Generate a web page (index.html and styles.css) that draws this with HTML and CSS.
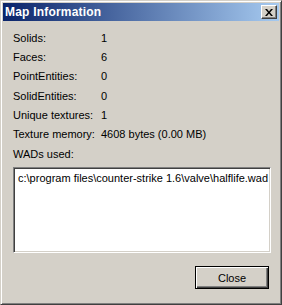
FILE: index.html
```html
<!DOCTYPE html>
<html lang="en">
  <head>
    <meta charset="UTF-8">
    <title>Map Information</title>
    <link rel="stylesheet" href="styles.css">
  </head>
  <body>
    <div class="window">
      <div class="titlebar">
        <span class="title">Map Information</span>
        <button class="close-x" title="Close">
          <svg width="8" height="7" viewBox="0 0 8 7">
            <path d="M0 0h2l2 2.5L6 0h2L5 3.5 8 7H6L4 4.5 2 7H0l3-3.5z" fill="#000"/>
          </svg>
        </button>
      </div>
      <div class="content">
        <div class="info">
          <span>Solids:</span><span>1</span>
          <span>Faces:</span><span>6</span>
          <span>PointEntities:</span><span>0</span>
          <span>SolidEntities:</span><span>0</span>
          <span>Unique textures:</span><span>1</span>
          <span>Texture memory:</span><span>4608 bytes (0.00 MB)</span>
          <span class="wide">WADs used:</span>
        </div>
        <div class="listbox">
          <div class="item">c:\program files\counter-strike 1.6\valve\halflife.wad</div>
        </div>
        <div class="buttons">
          <button class="btn default">Close</button>
        </div>
      </div>
    </div>
  </body>
</html>
```

FILE: styles.css
```css
body {
    margin: 0;
    font-family: "Liberation Sans", Arial, sans-serif;
    font-size: 11px;
    color: #000;
}
.window {
    width: 282px;
    height: 305px;
    box-sizing: border-box;
    background: #d4d0c8;
    border: 1px solid;
    border-color: #d4d0c8 #404040 #404040 #d4d0c8;
    box-shadow: inset 1px 1px #fff, inset -1px -1px #808080;
    padding: 2px;
    display: flex;
    flex-direction: column;
}
.titlebar {
    height: 18px;
    display: flex;
    align-items: center;
    justify-content: space-between;
    padding: 0 2px 0 2px;
    background: linear-gradient(to right, #0a246a, #a6caf0);
}
.title {
    color: #fff;
    font-family: "Liberation Sans", Arial, sans-serif;
    font-weight: bold;
    font-size: 12px;
    letter-spacing: 0.2px;
}
.close-x {
    width: 16px;
    height: 14px;
    padding: 0;
    margin: 0;
    background: #d4d0c8;
    border: 1px solid;
    border-color: #fff #404040 #404040 #fff;
    box-shadow: inset -1px -1px #808080;
    display: flex;
    align-items: center;
    justify-content: center;
}
.content {
    flex: 1;
    padding: 7px 8px 0 10px;
    display: flex;
    flex-direction: column;
}
.info {
    display: grid;
    grid-template-columns: 88px auto;
    grid-auto-rows: 19.33px;
    align-items: center;
}
.wide {
    grid-column: 1 / 3;
}
.listbox {
    margin-top: 4px;
    height: 86px;
    box-sizing: border-box;
    background: #fff;
    border: 1px solid;
    border-color: #808080 #fff #fff #808080;
    box-shadow: inset 1px 1px #404040, inset -1px -1px #d4d0c8;
    padding: 3px 0 0 4px;
    overflow: hidden;
}
.item {
    white-space: nowrap;
    line-height: 14px;
}
.buttons {
    display: flex;
    justify-content: flex-end;
    margin-top: 13px;
    padding-right: 2px;
}
.btn {
    width: 74px;
    height: 23px;
    box-sizing: border-box;
    font-family: "Liberation Sans", Arial, sans-serif;
    font-size: 11px;
    color: #000;
    background: #d4d0c8;
    padding: 0;
}
.btn.default {
    border: 1px solid #000;
    box-shadow: inset 1px 1px #fff, inset -1px -1px #404040, inset -2px -2px #808080;
}
```
